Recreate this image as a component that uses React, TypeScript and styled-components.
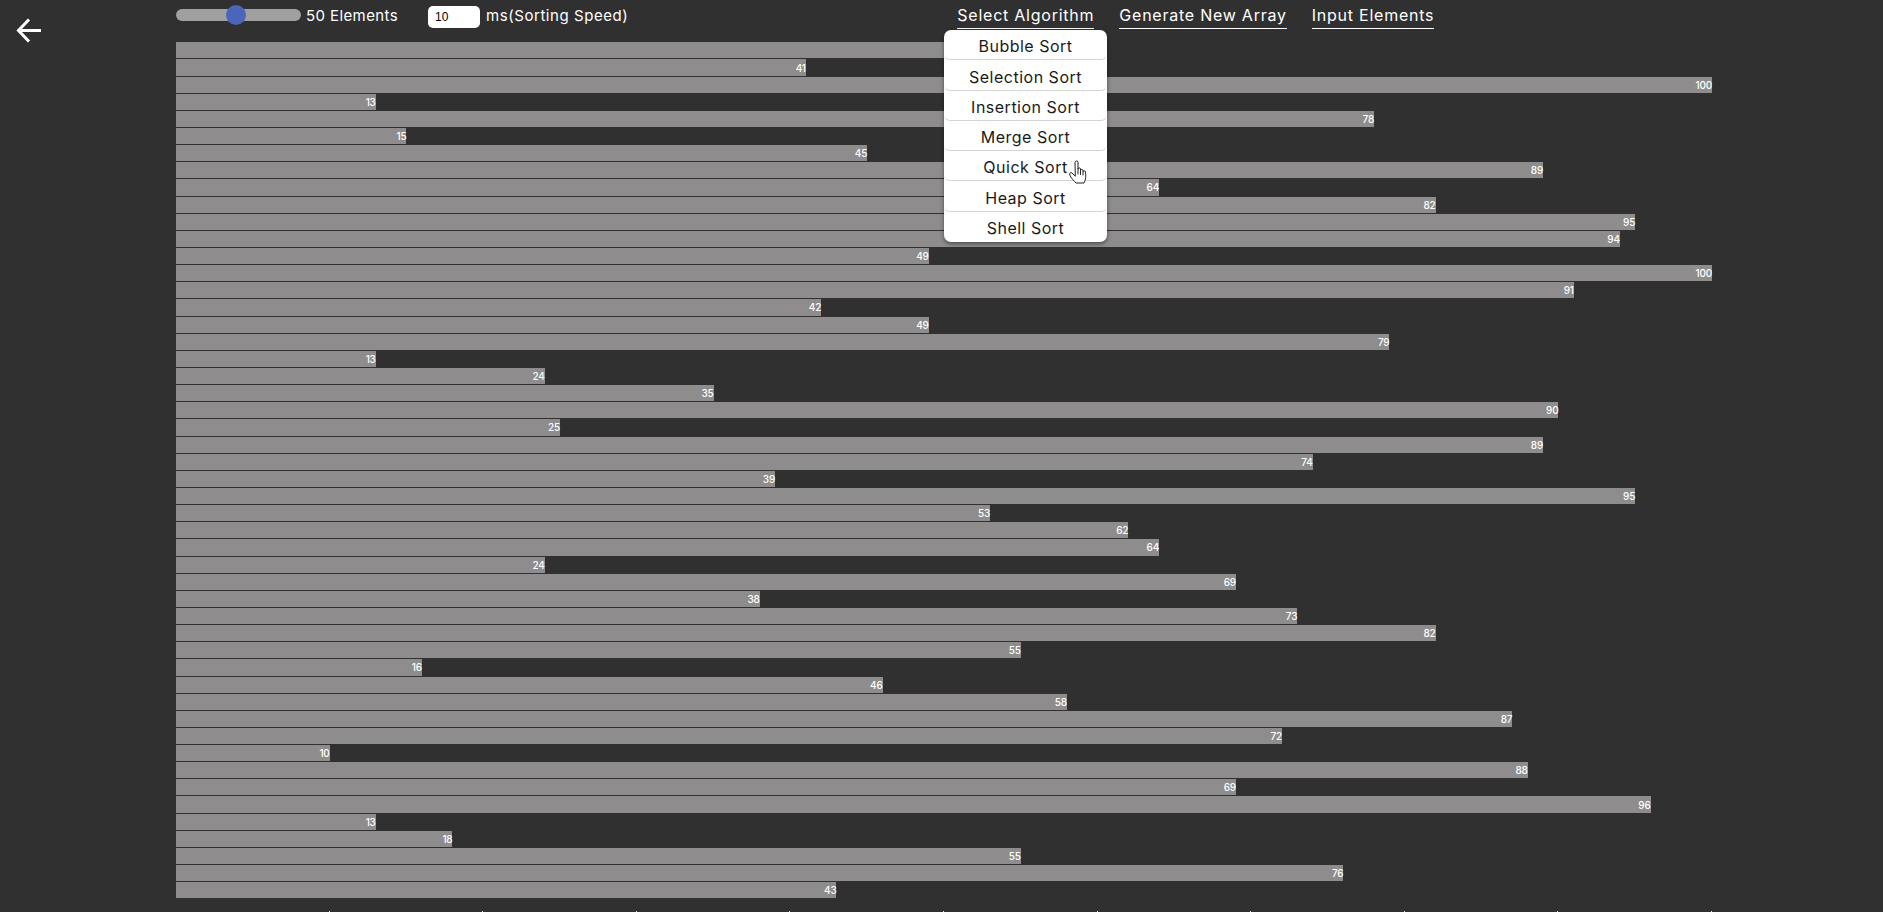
import React from "react";
import styled, { createGlobalStyle } from "styled-components";

const Global = createGlobalStyle`
  html, body { margin: 0; padding: 0; background: #303030; overflow: hidden; }
  * { box-sizing: border-box; }
`;

const Page = styled.div`
  display: grid;
  grid-template-columns: 176px 1536px;
  width: 1883px;
  height: 912px;
  overflow: hidden;
  background: #303030;
  color: #fff;
  font-family: Inter, "Noto Sans", sans-serif;
`;

const Side = styled.div`
  padding: 18px 0 0 16px;
`;

const BackIcon = styled.svg`
  display: block;
  width: 26px;
  height: 25px;
`;

const Main = styled.div`
  display: flex;
  flex-direction: column;
  position: relative;
`;

const Toolbar = styled.div`
  display: flex;
  align-items: flex-start;
  height: 42.3px;
`;

const Slider = styled.input`
  appearance: none;
  -webkit-appearance: none;
  display: block;
  width: 125px;
  height: 12px;
  margin: 9px 5px 0 0;
  border-radius: 6px;
  background: #a0a0a0;
  outline: none;
  &::-webkit-slider-thumb {
    -webkit-appearance: none;
    width: 20px;
    height: 20px;
    border-radius: 50%;
    background: #4a65bb;
    border: none;
  }
`;

const SmallLabel = styled.span`
  font-size: 15px;
  line-height: 20px;
  margin-top: 6px;
  letter-spacing: 0.56px;
  white-space: nowrap;
`;

const Count = styled(SmallLabel)`
  width: 122px;
  letter-spacing: 0.4px;
`;

const SpeedInput = styled.input`
  display: block;
  width: 52px;
  height: 22px;
  margin: 6px 6px 0 0;
  padding: 0 0 0 7px;
  border: none;
  border-radius: 5px;
  background: #fff;
  color: #000;
  font: 12px "Liberation Sans", sans-serif;
  outline: none;
`;

const Nav = styled.nav`
  display: flex;
  gap: 25px;
  margin-left: 329px;
`;

const NavButton = styled.button`
  display: block;
  height: 29px;
  padding: 2px 0 0;
  border: none;
  border-bottom: 1px solid #fff;
  background: none;
  color: #fff;
  font: 16px/24px Inter, sans-serif;
  letter-spacing: 0.76px;
  white-space: nowrap;
`;

const Menu = styled.div`
  position: absolute;
  left: 768px;
  top: 30px;
  z-index: 2;
  width: 163px;
  background: #fff;
  border-radius: 7px;
  box-shadow: 0 2px 4px rgba(0, 0, 0, 0.45);
`;

const MenuItem = styled.div`
  height: 30.3px;
  padding-top: 2.25px;
  border-bottom: 1px solid #d4d4d4;
  border-radius: 6px;
  color: #1a1a1a;
  font-size: 16px;
  line-height: 28px;
  letter-spacing: 0.5px;
  text-align: center;
  &:last-child { border-bottom: none; }
`;

const Pointer = styled.svg`
  position: absolute;
  left: 893px;
  top: 160px;
  z-index: 3;
  width: 18px;
  height: 24px;
`;

const Chart = styled.div`
  display: flex;
  flex-direction: column;
  height: 856px;
`;

const Row = styled.div`
  flex: 1 1 0;
  min-height: 0;
  padding-bottom: 1px;
  &:last-child { padding-bottom: 0; }
`;

const Bar = styled.div`
  display: flex;
  justify-content: flex-end;
  align-items: center;
  height: 100%;
  background: #8e8c8c;
  color: #fff;
  font-size: 10px;
  font-weight: 500;
  letter-spacing: -0.2px;
`;

const Axis = styled.div`
  display: grid;
  grid-template-columns: repeat(10, 1fr);
  height: 1px;
  margin-top: 12.7px;
`;

const Tick = styled.div`
  border-right: 1px solid #ddd;
`;

const values = [55, 41, 100, 13, 78, 15, 45, 89, 64, 82, 95, 94, 49, 100, 91, 42, 49, 79, 13, 24, 35, 90, 25, 89, 74, 39, 95, 53, 62, 64, 24, 69, 38, 73, 82, 55, 16, 46, 58, 87, 72, 10, 88, 69, 96, 13, 18, 55, 76, 43];
const algorithms = ["Bubble Sort", "Selection Sort", "Insertion Sort", "Merge Sort", "Quick Sort", "Heap Sort", "Shell Sort"];

export default function App() {
  return (
    <Page>
      <Global />
      <Side>
        <BackIcon viewBox="0 0 26 25" fill="none" stroke="#fff" strokeWidth="3">
          <path d="M25 12.5H2.5M13 1.5 2.5 12.5 13 23.5" />
        </BackIcon>
      </Side>
      <Main>
        <Toolbar>
          <Slider type="range" min={5} max={100} defaultValue={50} />
          <Count>50 Elements</Count>
          <SpeedInput defaultValue="10" />
          <SmallLabel>ms(Sorting Speed)</SmallLabel>
          <Nav>
            <NavButton>Select Algorithm</NavButton>
            <NavButton>Generate New Array</NavButton>
            <NavButton>Input Elements</NavButton>
          </Nav>
        </Toolbar>
        <Menu>
          {algorithms.map((a) => (
            <MenuItem key={a}>{a}</MenuItem>
          ))}
        </Menu>
        <Pointer viewBox="0 0 18 24" fill="none" stroke="#222" strokeWidth="1" strokeLinejoin="round" strokeLinecap="round">
          <path
            d="M6 2C6 .6 9 .6 9 2V9C9 7.500 11.500 7.500 11.500 9V10.500C11.500 9 14 9 14 10.500V11.500C14 10.500 16.500 10.500 16.500 12C17 16 17 19 15 23H7C5 21 2 18 .8 15C0 13 2 12 3 13L6 16Z"
            fill="#fff"
          />
          <path d="M9 9V14M11.500 10.500V14.500M14 11.500V15" />
        </Pointer>
        <Chart>
          {values.map((v, i) => (
            <Row key={i}>
              <Bar style={{ width: `${v}%` }}>{v}</Bar>
            </Row>
          ))}
        </Chart>
        <Axis>
          {Array.from({ length: 10 }, (_, i) => (
            <Tick key={i} />
          ))}
        </Axis>
      </Main>
    </Page>
  );
}
